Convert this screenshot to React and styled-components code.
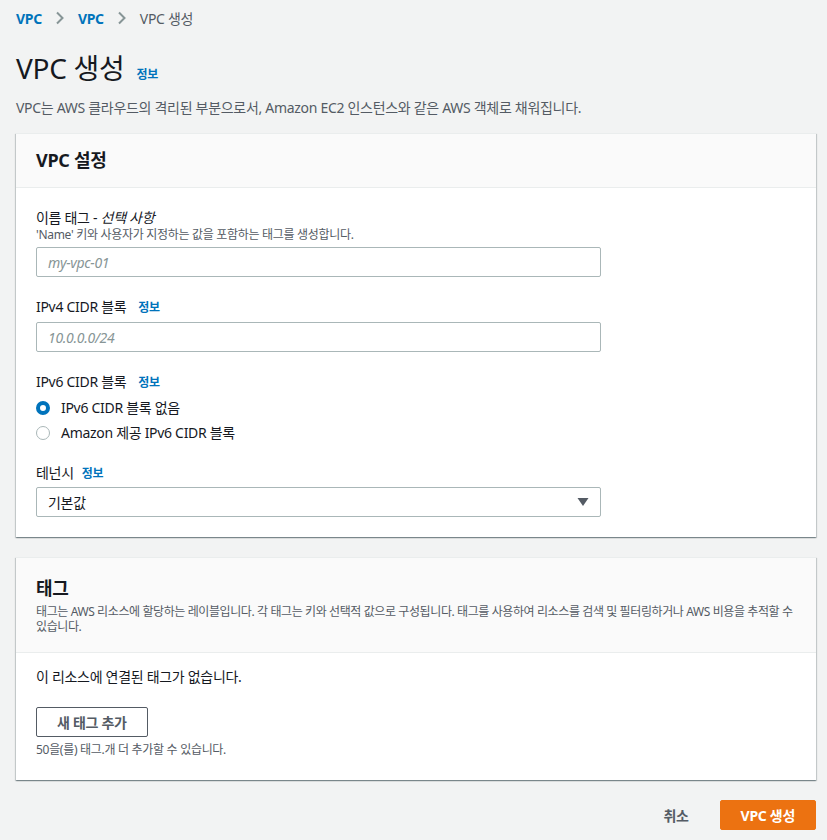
import React from "react";
import styled, { createGlobalStyle } from "styled-components";

const Global = createGlobalStyle`
  html, body { margin: 0; padding: 0; background: #f2f3f3; }
  body { font-family: "Noto Sans", "Noto Sans CJK KR", sans-serif; color: #16191f; letter-spacing: -0.3px; }
  * { box-sizing: border-box; }
`;

const Page = styled.div`
  padding: 0 11px 0 16px;
  min-height: 840px;
`;

const Crumbs = styled.nav`
  display: flex;
  align-items: center;
  gap: 13px;
  height: 36px;
  font-size: 14px;
`;

const Crumb = styled.span`
  color: ${(p) => (p.$current ? "#545b64" : "#0073bb")};
  font-weight: ${(p) => (p.$current ? 400 : 700)};
`;

const Chevron = () => (
  <svg width="10" height="14" viewBox="0 0 10 14">
    <path d="M2 1.5 L7.5 7 L2 12.5" fill="none" stroke="#879596" strokeWidth="2" />
  </svg>
);

const TitleRow = styled.div`
  display: flex;
  align-items: baseline;
  gap: 12px;
  margin-top: 14px;
`;

const Title = styled.h1`
  margin: 0;
  font-size: 28px;
  font-weight: 400;
  line-height: 36px;
  color: #16191f;
`;

const Info = styled.span`
  color: #0073bb;
  font-size: 12px;
  font-weight: 700;
  margin-left: ${(p) => p.$ml || 0}px;
`;

const Desc = styled.p`
  margin: 12px 0 15px;
  font-size: 14px;
  line-height: 20px;
  color: #545b64;
`;

const Card = styled.section`
  background: #fff;
  box-shadow: 0 1px 1px 0 rgba(0, 28, 36, 0.3), 1px 1px 1px 0 rgba(0, 28, 36, 0.15),
    -1px 1px 1px 0 rgba(0, 28, 36, 0.15);
  border-top: 1px solid #eaeded;
  margin-bottom: 20px;
`;

const CardHeader = styled.header`
  background: #fafafa;
  border-bottom: 1px solid #eaeded;
  padding: ${(p) => p.$pad || "16px 20px"};
`;

const CardTitle = styled.h2`
  margin: 0;
  font-size: 18px;
  font-weight: 700;
  line-height: 24px;
`;

const CardDesc = styled.p`
  margin: 4px 0 0;
  font-size: 12px;
  line-height: 15px;
  letter-spacing: -0.4px;
  color: #545b64;
`;

const CardBody = styled.div`
  padding: ${(p) => p.$pad || "20px"};
  display: flex;
  flex-direction: column;
  gap: ${(p) => p.$gap || 0}px;
`;

const Field = styled.div`
  display: flex;
  flex-direction: column;
`;

const Label = styled.div`
  font-size: 14px;
  line-height: 20px;
  color: #16191f;
  display: flex;
  align-items: baseline;
  gap: 8px;
`;

const Em = styled.i`
  font-style: italic;
`;

const Hint = styled.div`
  font-size: 12px;
  line-height: 14px;
  color: #545b64;
  margin-bottom: 5px;
`;

const Input = styled.div`
  width: 565px;
  height: 30px;
  border: 1px solid #aab7b8;
  border-radius: 2px;
  background: #fff;
  padding: 0 11px;
  display: flex;
  align-items: center;
  font-size: 14px;
  color: ${(p) => (p.$placeholder ? "#879596" : "#16191f")};
  font-style: ${(p) => (p.$placeholder ? "italic" : "normal")};
  justify-content: space-between;
  margin-top: ${(p) => p.$mt || 0}px;
`;

const Radios = styled.div`
  display: flex;
  flex-direction: column;
  gap: 5px;
  margin-top: 5px;
`;

const RadioRow = styled.label`
  display: flex;
  align-items: center;
  gap: 11px;
  font-size: 14px;
  line-height: 20px;
`;

const RadioDot = styled.span`
  width: 14px;
  height: 14px;
  border-radius: 50%;
  border: ${(p) => (p.$on ? "4px solid #0073bb" : "1px solid #aab7b8")};
  background: #fff;
  flex: none;
`;

const Button = styled.button`
  font-family: inherit;
  letter-spacing: inherit;
  font-size: 14px;
  font-weight: 700;
  height: 30px;
  padding: 0 20px;
  border-radius: 2px;
  cursor: pointer;
  border: 1px solid ${(p) => (p.$primary ? "#ec7211" : p.$link ? "transparent" : "#545b64")};
  background: ${(p) => (p.$primary ? "#ec7211" : p.$link ? "transparent" : "#fff")};
  color: ${(p) => (p.$primary ? "#fff" : "#545b64")};
`;

const Text = styled.p`
  margin: 0;
  font-size: 14px;
  line-height: 20px;
  color: #16191f;
`;

const Small = styled.p`
  margin: 5px 0 0;
  font-size: 12px;
  line-height: 16px;
  color: #545b64;
`;

const Spacer = styled.div`
  height: ${(p) => p.$h}px;
`;

const Footer = styled.div`
  display: flex;
  justify-content: flex-end;
  gap: 10px;
`;

export default function App() {
  return (
    <>
      <Global />
      <Page>
        <Crumbs>
          <Crumb>VPC</Crumb>
          <Chevron />
          <Crumb>VPC</Crumb>
          <Chevron />
          <Crumb $current>VPC 생성</Crumb>
        </Crumbs>
        <TitleRow>
          <Title>VPC 생성</Title>
          <Info>정보</Info>
        </TitleRow>
        <Desc>VPC는 AWS 클라우드의 격리된 부분으로서, Amazon EC2 인스턴스와 같은 AWS 객체로 채워집니다.</Desc>

        <Card>
          <CardHeader $pad="14px 20px 15px">
            <CardTitle>VPC 설정</CardTitle>
          </CardHeader>
          <CardBody $gap={20}>
            <Field>
              <Label>
                <span>
                  이름 태그 - <Em>선택 사항</Em>
                </span>
              </Label>
              <Hint>'Name' 키와 사용자가 지정하는 값을 포함하는 태그를 생성합니다.</Hint>
              <Input $placeholder>my-vpc-01</Input>
            </Field>
            <Field>
              <Label>
                IPv4 CIDR 블록 <Info $ml={4}>정보</Info>
              </Label>
              <Input $placeholder $mt={4}>10.0.0.0/24</Input>
            </Field>
            <Field>
              <Label>
                IPv6 CIDR 블록 <Info $ml={4}>정보</Info>
              </Label>
              <Radios>
                <RadioRow>
                  <RadioDot $on />
                  IPv6 CIDR 블록 없음
                </RadioRow>
                <RadioRow>
                  <RadioDot />
                  Amazon 제공 IPv6 CIDR 블록
                </RadioRow>
              </Radios>
            </Field>
            <Field>
              <Label>
                테넌시 <Info>정보</Info>
              </Label>
              <Input $mt={3}>
                기본값
                <svg width="12" height="10" viewBox="0 0 12 10">
                  <path d="M0.5 1 L11.5 1 L6 9 Z" fill="#545b64" />
                </svg>
              </Input>
            </Field>
          </CardBody>
        </Card>

        <Card>
          <CardHeader $pad="18px 20px 18px">
            <CardTitle>태그</CardTitle>
            <CardDesc>
              태그는 AWS 리소스에 할당하는 레이블입니다. 각 태그는 키와 선택적 값으로 구성됩니다. 태그를 사용하여 리소스를 검색 및 필터링하거나 AWS 비용을 추적할 수 있습니다.
            </CardDesc>
          </CardHeader>
          <CardBody $pad="14px 20px 22px">
            <Text>이 리소스에 연결된 태그가 없습니다.</Text>
            <Spacer $h={20} />
            <div>
              <Button>새 태그 추가</Button>
            </div>
            <Small>50을(를) 태그.개 더 추가할 수 있습니다.</Small>
          </CardBody>
        </Card>

        <Footer>
          <Button $link>취소</Button>
          <Button $primary>VPC 생성</Button>
        </Footer>
      </Page>
    </>
  );
}
